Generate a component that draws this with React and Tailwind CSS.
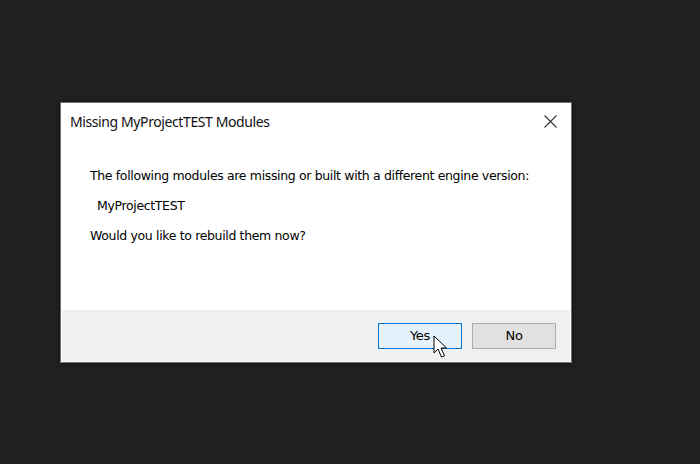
export default function App() {
	return (
		<div className="w-[700px] h-[464px] bg-[#212121] pt-[102px] pl-[60px]">
			<div className="w-[512px] h-[261px] bg-white border border-[#6f6f6f] flex flex-col shadow-[0_0_6px_rgba(0,0,0,0.5)]">
				<div className="h-[38px] flex items-center justify-between pl-[9px] pr-[14px] pb-[1px]">
					<span className='text-[14px] text-[#111] font-["Noto_Sans",sans-serif] tracking-[-0.4px]'>
						Missing MyProjectTEST Modules
					</span>
					<svg width="13" height="13" viewBox="0 0 13 13">
						<path d="M0.5 0.5 L12.5 12.5 M12.5 0.5 L0.5 12.5" stroke="#333" strokeWidth="1.1" />
					</svg>
				</div>
				<div className='flex-1 pl-[29px] pt-[27px] text-[12.5px] leading-[16px] text-black font-["DejaVu_Sans",sans-serif] tracking-[-0.35px] flex flex-col gap-[14px]'>
					<p>The following modules are missing or built with a different engine version:</p>
					<p className="pl-[7px]">MyProjectTEST</p>
					<p>Would you like to rebuild them now?</p>
				</div>
				<div className="h-[51px] mx-[1px] mb-[1px] bg-[#f0f0f0] flex items-center justify-end gap-[10px] pr-[14px] relative">
					<button className='w-[84px] h-[26px] bg-[#e5f1fb] border border-[#0078d7] text-[13px] text-black font-["DejaVu_Sans",sans-serif] tracking-[-0.3px]'>
						Yes
					</button>
					<button className='w-[84px] h-[26px] bg-[#e1e1e1] border border-[#adadad] text-[13px] text-black font-["DejaVu_Sans",sans-serif] tracking-[-0.3px]'>
						No
					</button>
					<svg
						width="17"
						height="24"
						viewBox="0 0 17 24"
						className="absolute left-[371px] top-[25px]"
					>
						<path
							d="M1 1 L1 18 L5 14 L8.5 22 L11.5 20.8 L8 13 L13.5 13 Z"
							fill="white"
							stroke="black"
							strokeWidth="1"
							strokeLinejoin="round"
						/>
					</svg>
				</div>
			</div>
		</div>
	);
}
